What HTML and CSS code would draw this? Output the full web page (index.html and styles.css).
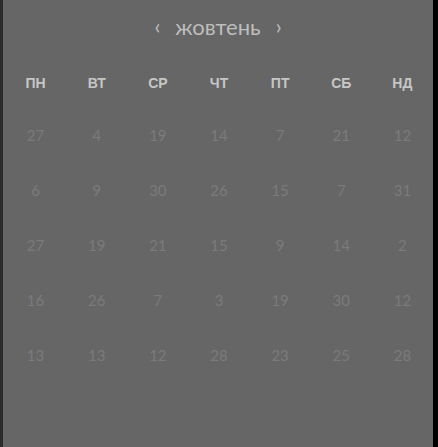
FILE: index.html
```html
<!DOCTYPE html>
<html lang="uk">
<head>
<meta charset="utf-8">
<link rel="stylesheet" href="styles.css">
</head>
<body>
<div class="frame">
  <div class="panel">
    <div class="month">
      <span class="chev">‹</span>
      <span class="month-name">жовтень</span>
      <span class="chev">›</span>
    </div>
    <div class="weekdays">
      <span>ПН</span><span>ВТ</span><span>СР</span><span>ЧТ</span><span>ПТ</span><span>СБ</span><span>НД</span>
    </div>
    <div class="days">
      <span>27</span><span>4</span><span>19</span><span>14</span><span>7</span><span>21</span><span>12</span>
      <span>6</span><span>9</span><span>30</span><span>26</span><span>15</span><span>7</span><span>31</span>
      <span>27</span><span>19</span><span>21</span><span>15</span><span>9</span><span>14</span><span>2</span>
      <span>16</span><span>26</span><span>7</span><span>3</span><span>19</span><span>30</span><span>12</span>
      <span>13</span><span>13</span><span>12</span><span>28</span><span>23</span><span>25</span><span>28</span>
    </div>
  </div>
</div>
</body>
</html>
```
FILE: styles.css
```css
html, body {
  margin: 0;
  padding: 0;
  background: #000;
}
.frame {
  width: 438px;
  height: 447px;
  display: flex;
  background: #000;
}
.panel {
  width: 430px;
  height: 447px;
  background: #666666;
  border-left: 3px solid #2c2c2c;
  box-sizing: content-box;
}
.month {
  height: 56px;
  display: flex;
  align-items: center;
  justify-content: center;
  gap: 15px;
  font-family: "Lato", "Open Sans", sans-serif;
  color: #bdbdbd;
}
.month-name {
  font-size: 22px;
  line-height: 1;
  padding-bottom: 2px;
}
.chev {
  font-size: 21px;
  line-height: 1;
  padding-bottom: 5px;
  font-weight: 400;
}
.weekdays {
  margin-top: 16px;
  padding-left: 2px;
  display: grid;
  grid-template-columns: repeat(7, 1fr);
  height: 22px;
  align-items: center;
  font-family: "Liberation Sans", Arial, sans-serif;
  font-weight: 700;
  font-size: 14px;
  color: #c6c6c6;
  text-align: center;
}
.days {
  margin-top: 13px;
  padding-left: 2px;
  display: grid;
  grid-template-columns: repeat(7, 1fr);
  grid-auto-rows: 55px;
  align-items: center;
  font-family: "Lato", "Open Sans", sans-serif;
  font-size: 15px;
  color: #7b7b7b;
  text-align: center;
}
```
